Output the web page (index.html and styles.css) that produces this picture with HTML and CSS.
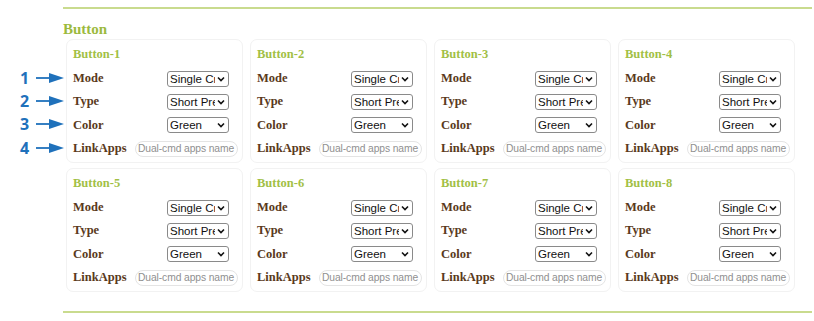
FILE: index.html
```html
<!DOCTYPE html>
<html>
<head>
<meta charset="utf-8">
<link rel="stylesheet" href="styles.css">
</head>
<body>
<div class="page">
  <div class="rule"></div>
  <section class="section">
    <h2 class="heading">Button</h2>
    <div class="callouts">
      <div class="callout"><span class="num">1</span><svg class="arrow" width="28" height="12" viewBox="0 0 28 12"><line x1="0" y1="6" x2="15" y2="6" stroke="#1f71bb" stroke-width="1.8"/><polygon points="13,1 28,6 13,11" fill="#1f71bb"/></svg></div>
      <div class="callout"><span class="num">2</span><svg class="arrow" width="28" height="12" viewBox="0 0 28 12"><line x1="0" y1="6" x2="15" y2="6" stroke="#1f71bb" stroke-width="1.8"/><polygon points="13,1 28,6 13,11" fill="#1f71bb"/></svg></div>
      <div class="callout"><span class="num">3</span><svg class="arrow" width="28" height="12" viewBox="0 0 28 12"><line x1="0" y1="6" x2="15" y2="6" stroke="#1f71bb" stroke-width="1.8"/><polygon points="13,1 28,6 13,11" fill="#1f71bb"/></svg></div>
      <div class="callout"><span class="num">4</span><svg class="arrow" width="28" height="12" viewBox="0 0 28 12"><line x1="0" y1="6" x2="15" y2="6" stroke="#1f71bb" stroke-width="1.8"/><polygon points="13,1 28,6 13,11" fill="#1f71bb"/></svg></div>
    </div>
    <div class="grid">
      <div class="card"><div class="title">Button-1</div>
        <div class="row"><span class="label">Mode</span><select class="sel"><option>Single Cmd</option></select></div>
        <div class="row"><span class="label">Type</span><select class="sel"><option>Short Press</option></select></div>
        <div class="row"><span class="label">Color</span><select class="sel"><option>Green</option></select></div>
        <div class="row"><span class="label">LinkApps</span><input class="inp" placeholder="Dual-cmd apps name"></div>
      </div>
      <div class="card"><div class="title">Button-2</div>
        <div class="row"><span class="label">Mode</span><select class="sel"><option>Single Cmd</option></select></div>
        <div class="row"><span class="label">Type</span><select class="sel"><option>Short Press</option></select></div>
        <div class="row"><span class="label">Color</span><select class="sel"><option>Green</option></select></div>
        <div class="row"><span class="label">LinkApps</span><input class="inp" placeholder="Dual-cmd apps name"></div>
      </div>
      <div class="card"><div class="title">Button-3</div>
        <div class="row"><span class="label">Mode</span><select class="sel"><option>Single Cmd</option></select></div>
        <div class="row"><span class="label">Type</span><select class="sel"><option>Short Press</option></select></div>
        <div class="row"><span class="label">Color</span><select class="sel"><option>Green</option></select></div>
        <div class="row"><span class="label">LinkApps</span><input class="inp" placeholder="Dual-cmd apps name"></div>
      </div>
      <div class="card"><div class="title">Button-4</div>
        <div class="row"><span class="label">Mode</span><select class="sel"><option>Single Cmd</option></select></div>
        <div class="row"><span class="label">Type</span><select class="sel"><option>Short Press</option></select></div>
        <div class="row"><span class="label">Color</span><select class="sel"><option>Green</option></select></div>
        <div class="row"><span class="label">LinkApps</span><input class="inp" placeholder="Dual-cmd apps name"></div>
      </div>
      <div class="card"><div class="title">Button-5</div>
        <div class="row"><span class="label">Mode</span><select class="sel"><option>Single Cmd</option></select></div>
        <div class="row"><span class="label">Type</span><select class="sel"><option>Short Press</option></select></div>
        <div class="row"><span class="label">Color</span><select class="sel"><option>Green</option></select></div>
        <div class="row"><span class="label">LinkApps</span><input class="inp" placeholder="Dual-cmd apps name"></div>
      </div>
      <div class="card"><div class="title">Button-6</div>
        <div class="row"><span class="label">Mode</span><select class="sel"><option>Single Cmd</option></select></div>
        <div class="row"><span class="label">Type</span><select class="sel"><option>Short Press</option></select></div>
        <div class="row"><span class="label">Color</span><select class="sel"><option>Green</option></select></div>
        <div class="row"><span class="label">LinkApps</span><input class="inp" placeholder="Dual-cmd apps name"></div>
      </div>
      <div class="card"><div class="title">Button-7</div>
        <div class="row"><span class="label">Mode</span><select class="sel"><option>Single Cmd</option></select></div>
        <div class="row"><span class="label">Type</span><select class="sel"><option>Short Press</option></select></div>
        <div class="row"><span class="label">Color</span><select class="sel"><option>Green</option></select></div>
        <div class="row"><span class="label">LinkApps</span><input class="inp" placeholder="Dual-cmd apps name"></div>
      </div>
      <div class="card"><div class="title">Button-8</div>
        <div class="row"><span class="label">Mode</span><select class="sel"><option>Single Cmd</option></select></div>
        <div class="row"><span class="label">Type</span><select class="sel"><option>Short Press</option></select></div>
        <div class="row"><span class="label">Color</span><select class="sel"><option>Green</option></select></div>
        <div class="row"><span class="label">LinkApps</span><input class="inp" placeholder="Dual-cmd apps name"></div>
      </div>
    </div>
  </section>
  <div class="rule rule-bottom"></div>
</div>
</body>
</html>
```

FILE: styles.css
```css
* { box-sizing: border-box; }
html, body { margin: 0; padding: 0; background: #fff; }
body { font-family: "Liberation Serif", serif; }
.page { padding: 7px 2px 0 63px; width: 814px; }
.rule { height: 2px; background: #c9db8e; }
.rule-bottom { margin-top: 19px; }
.section { position: relative; }
.heading {
  margin: 11px 0 1px 0;
  font-size: 15px;
  line-height: 18px;
  font-weight: bold;
  color: #9cba3e;
}
.grid {
  display: grid;
  grid-template-columns: repeat(4, 177px);
  column-gap: 7px;
  row-gap: 5px;
  margin-left: 3px;
}
.card {
  border: 1px solid #f2f2f2;
  border-radius: 7px;
  padding: 6px 4px 3px 6px;
  height: 124px;
}
.title {
  font-size: 12.5px;
  font-weight: bold;
  line-height: 16px;
  color: #a2bf45;
  margin-bottom: 5px;
}
.row {
  display: flex;
  align-items: center;
  height: 23.3px;
}
.label {
  font-size: 12.5px;
  font-weight: bold;
  color: #5a3a1c;
}
.sel {
  -webkit-appearance: none;
  appearance: none;
  margin-left: auto;
  margin-right: 9px;
  width: 62px;
  height: 16px;
  padding: 0 13px 0 2px;
  border: 1px solid #8a8a8a;
  border-radius: 3px;
  background: #fff url("data:image/svg+xml,%3Csvg xmlns='http://www.w3.org/2000/svg' width='8' height='6' viewBox='0 0 8 6'%3E%3Cpath d='M1 1.5 L4 4.5 L7 1.5' fill='none' stroke='%23111' stroke-width='1.6'/%3E%3C/svg%3E") no-repeat right 3px center;
  font-family: "Liberation Sans", Arial, sans-serif;
  font-size: 11.5px;
  line-height: 14px;
  color: #111;
  overflow: hidden;
}
.inp {
  margin-left: auto;
  width: 103px;
  height: 16px;
  padding: 0 2px;
  border: 1px solid #e4e4e4;
  border-radius: 8px;
  font-family: "Liberation Sans", Arial, sans-serif;
  font-size: 10.3px;
  letter-spacing: -0.1px;
  color: #8e8e8e;
  background: #fff;
}
.inp::placeholder { color: #909090; }
.callouts {
  position: absolute;
  left: -41px;
  top: 46px;
  display: flex;
  flex-direction: column;
}
.callout {
  display: flex;
  align-items: center;
  height: 23.3px;
}
.num {
  font-family: "Open Sans", sans-serif;
  font-weight: bold;
  font-size: 16px;
  line-height: 16px;
  color: #1f71bb;
  width: 12px;
  margin-left: -2px;
}
.arrow { margin-left: 4px; }
```
